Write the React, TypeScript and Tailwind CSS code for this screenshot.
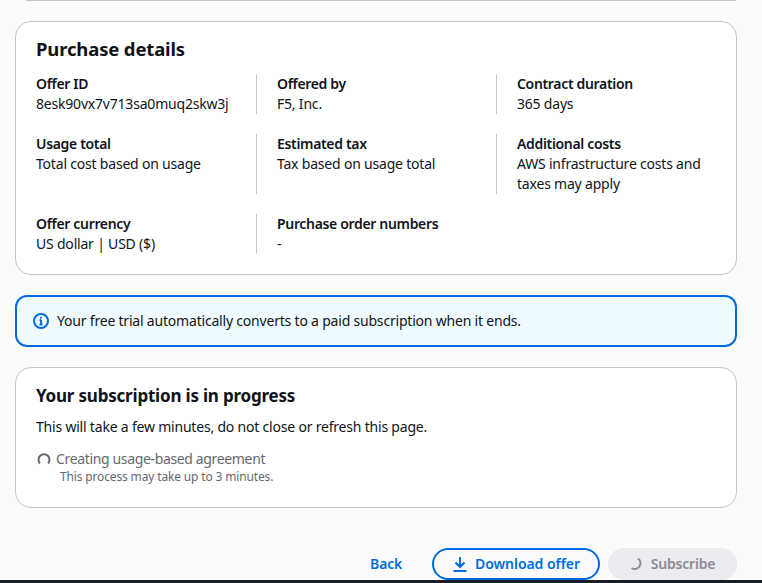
const rows = [
  [
    { label: "Offer ID", value: "8esk90vx7v713sa0muq2skw3j" },
    { label: "Offered by", value: "F5, Inc." },
    { label: "Contract duration", value: "365 days" },
  ],
  [
    { label: "Usage total", value: "Total cost based on usage" },
    { label: "Estimated tax", value: "Tax based on usage total" },
    { label: "Additional costs", value: "AWS infrastructure costs and taxes may apply" },
  ],
  [
    { label: "Offer currency", value: "US dollar | USD ($)" },
    { label: "Purchase order numbers", value: "-" },
  ],
];

function Field({ label, value, first }: { label: string; value: string; first: boolean }) {
  return (
    <div className={first ? "pr-5" : "border-l border-[#c6c6cd] pl-5 pr-3"}>
      <div className="font-semibold tracking-[-0.33px]">{label}</div>
      <div>{value}</div>
    </div>
  );
}

export default function App() {
  return (
    <div className="flex h-[583px] w-[762px] flex-col overflow-hidden bg-[#fbfbfc] font-['Noto_Sans',sans-serif] text-sm leading-5 tracking-[-0.2px] text-[#0f141a]">
      <div className="mx-[26px] h-px shrink-0 bg-[#c6c6cd]" />
      <div className="ml-[15px] flex h-[579px] w-[722px] shrink-0 flex-col overflow-hidden pt-5">
        <section className="h-[254px] shrink-0 rounded-2xl border border-[#c6c6cd] bg-white px-5 pt-3">
          <h2 className="text-[18.5px] leading-[30px] font-bold tracking-[-0.15px]">Purchase details</h2>
          <div className="mt-2.5 flex flex-col gap-5">
            {rows.map((row) => (
              <div key={row[0].label} className="grid grid-cols-[220px_240px_220px]">
                {row.map((f, i) => (
                  <Field key={f.label} label={f.label} value={f.value} first={i === 0} />
                ))}
              </div>
            ))}
          </div>
        </section>

        <div className="mt-5 flex h-[52px] shrink-0 items-center gap-2 rounded-xl border-2 border-[#006ce0] bg-[#f0fbff] px-4">
          <svg width="16" height="16" viewBox="0 0 16 16" fill="none" stroke="#006ce0" strokeWidth="2">
            <circle cx="8" cy="8" r="7" />
            <path d="M8 11.5V7M6.5 7H8M6.5 11.5h3M8 4v1.6" />
          </svg>
          <span>Your free trial automatically converts to a paid subscription when it ends.</span>
        </div>

        <section className="mt-5 h-[141px] shrink-0 rounded-2xl border border-[#c6c6cd] bg-white px-5 pt-[13px]">
          <h2 className="text-[17px] leading-[30px] font-bold tracking-[-0.2px]">Your subscription is in progress</h2>
          <p className="mt-[6px]">This will take a few minutes, do not close or refresh this page.</p>
          <div className="mt-3 flex items-center gap-[5px] pl-px tracking-[-0.35px] text-[#656871]">
            <svg width="14" height="14" viewBox="0 0 14 14" fill="none" stroke="#656871" strokeWidth="2">
              <path d="M3 11.5 A5.5 5.5 0 1 1 11 11.5" />
            </svg>
            <span>Creating usage-based agreement</span>
          </div>
          <div className="pl-6 text-xs leading-4 tracking-[-0.15px] text-[#656871]">This process may take up to 3 minutes.</div>
        </section>

        <div className="mt-10 flex shrink-0 items-center justify-end">
          <button className="mr-[30px] font-semibold text-[#006ce0]">Back</button>
          <button className="mr-2 flex h-8 w-[168px] items-center justify-center gap-[7px] rounded-full border-2 border-[#006ce0] font-semibold tracking-[-0.05px] text-[#006ce0]">
            <svg width="16" height="16" viewBox="0 0 16 16" fill="none" stroke="#006ce0" strokeWidth="2">
              <path d="M8 1v10M3.5 6.5 8 11l4.5-4.5M1.5 15h13" />
            </svg>
            Download offer
          </button>
          <button className="flex h-8 w-[129px] items-center justify-center gap-[7px] rounded-full bg-[#ebebf0] font-semibold text-[#8c8c94]">
            <svg width="14" height="14" viewBox="0 0 14 14" fill="none" stroke="#8c8c94" strokeWidth="2">
              <path d="M8 1.5 A5.5 5.5 0 0 1 1.5 11" />
            </svg>
            Subscribe
          </button>
        </div>
      </div>
      <div className="h-[3px] shrink-0 bg-[#161d26]" />
    </div>
  );
}
